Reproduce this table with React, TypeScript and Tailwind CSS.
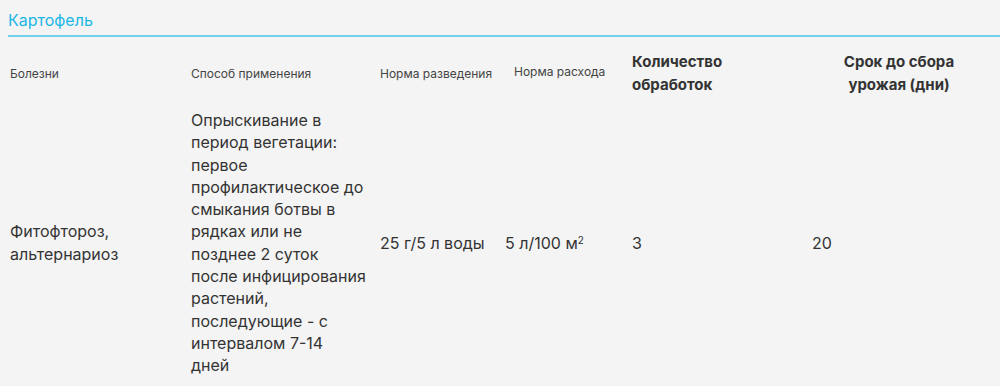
const rows = [
  {
    disease: "Фитофтороз, альтернариоз",
    method: [
      "Опрыскивание в период вегетации: первое профилактическое до смыкания ботвы в рядках или не позднее 2 суток после инфицирования растений, последующие - с интервалом 7-14",
      "дней",
    ],
    dilution: "25 г/5 л воды",
    count: "3",
    days: "20",
  },
];

export default function App() {
  return (
    <div className="min-h-[386px] bg-[#f4f4f4] font-['Inter',sans-serif] text-[#333]">
      <div className="pl-2 pt-[9px]">
        <h2 className="pb-[4px] text-[16px] leading-[22px] text-[#1ab6e6]">Картофель</h2>
        <div className="h-[2px] bg-[#6fd2ec]" />
      </div>
      <table className="ml-[8px] w-[984px] table-fixed border-collapse">
        <colgroup>
          <col className="w-[181px]" />
          <col className="w-[189px]" />
          <col className="w-[125px]" />
          <col className="w-[127px]" />
          <col className="w-[180px]" />
          <col />
        </colgroup>
        <thead>
          <tr className="h-[72px] align-middle text-[12px] text-[#444]">
            <th className="pl-[2px] pt-[1px] text-left font-normal">Болезни</th>
            <th className="pl-[2px] pt-[1px] text-left font-normal">Способ применения</th>
            <th className="pl-[2px] pt-[1px] text-left font-normal">Норма разведения</th>
            <th className="pb-[3px] pl-[11px] text-left font-normal">Норма расхода</th>
            <th className="pl-[2px] text-left text-[15px] font-bold leading-[23px] text-[#333]">
              Количество
              <br />
              обработок
            </th>
            <th className="pr-[4px] text-center text-[15px] font-bold leading-[23px] text-[#333]">
              Срок до сбора
              <br />
              урожая (дни)
            </th>
          </tr>
        </thead>
        <tbody>
          {rows.map((r) => (
            <tr key={r.disease} className="align-middle text-[16px] leading-[22.3px]">
              <td className="pl-[2px] pr-6">{r.disease}</td>
              <td className="pl-[2px] pr-[9px]">
                {r.method[0]}
                <br />
                {r.method[1]}
              </td>
              <td className="pl-[2px]">{r.dilution}</td>
              <td className="pl-[2px]">
                5 л/100 м<sup className="text-[10px]">2</sup>
              </td>
              <td className="pl-[2px]">{r.count}</td>
              <td className="pl-[2px]">{r.days}</td>
            </tr>
          ))}
        </tbody>
      </table>
    </div>
  );
}
